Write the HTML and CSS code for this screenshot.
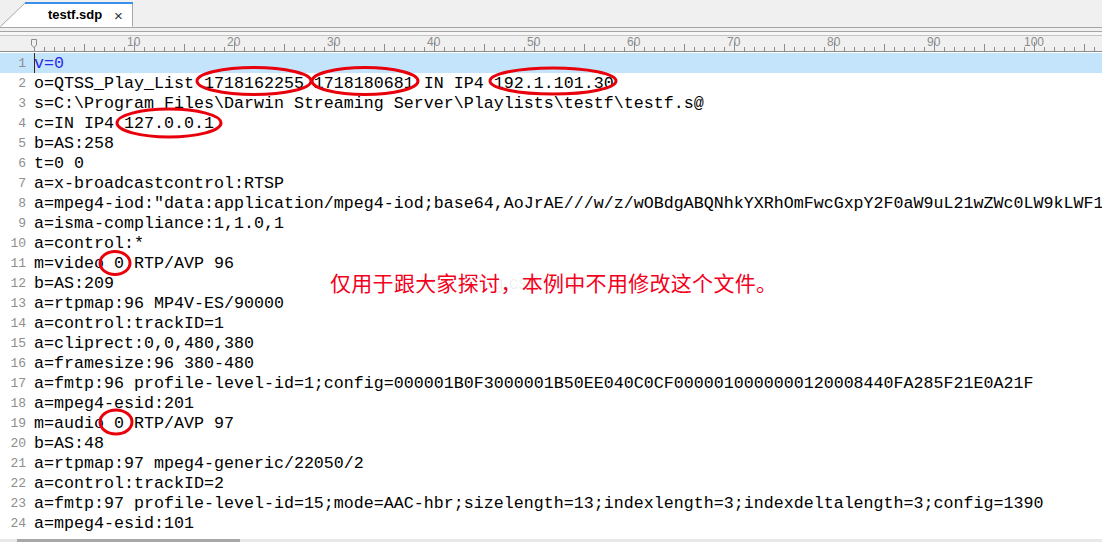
FILE: index.html
```html
<!DOCTYPE html>
<html lang="en">
<head>
  <meta charset="UTF-8">
  <title>testf.sdp</title>
  <link rel="stylesheet" href="styles.css">
</head>
<body>
  <div class="tabbar">
    <div class="tab">
      <svg class="tab-shape" width="134" height="25" viewBox="0 0 134 25">
        <path d="M0.5 25 L25 1 L132.5 1 L132.5 25 Z" fill="#fff"/>
        <path d="M0.5 24.5 L25 1" stroke="#a8a8a8" fill="none"/>
        <path d="M132.5 1 L132.5 24.5" stroke="#a8a8a8" fill="none"/>
        <rect x="25" y="0" width="108" height="2" fill="#3c8fe8"/>
      </svg>
      <span class="tab-name">testf.sdp</span>
      <span class="tab-close">&#215;</span>
    </div>
  </div>
  <div class="strip"></div>
  <div class="ruler">
    <svg class="ruler-mark" width="8" height="11" viewBox="0 0 8 11">
      <path d="M1.5 1.5 H6.5 V7 L4 9.5 L1.5 7 Z" fill="#f0f0f0" stroke="#8c8c8c"/>
    </svg>
    <div class="ruler-scale">
      <span class="ruler-num"></span>
      <span class="ruler-num">10</span>
      <span class="ruler-num">20</span>
      <span class="ruler-num">30</span>
      <span class="ruler-num">40</span>
      <span class="ruler-num">50</span>
      <span class="ruler-num">60</span>
      <span class="ruler-num">70</span>
      <span class="ruler-num">80</span>
      <span class="ruler-num">90</span>
      <span class="ruler-num">100</span>
    </div>
  </div>

  <div class="editor">
    <div class="line current"><span class="ln">1</span><span class="code"><span class="kw">v=0</span></span></div>
    <div class="line"><span class="ln">2</span><span class="code">o=QTSS_Play_List 1718162255 1718180681 IN IP4 192.1.101.30</span></div>
    <div class="line"><span class="ln">3</span><span class="code">s=C:\Program_Files\Darwin Streaming Server\Playlists\testf\testf.s@</span></div>
    <div class="line"><span class="ln">4</span><span class="code">c=IN IP4 127.0.0.1</span></div>
    <div class="line"><span class="ln">5</span><span class="code">b=AS:258</span></div>
    <div class="line"><span class="ln">6</span><span class="code">t=0 0</span></div>
    <div class="line"><span class="ln">7</span><span class="code">a=x-broadcastcontrol:RTSP</span></div>
    <div class="line"><span class="ln">8</span><span class="code">a=mpeg4-iod:"data:application/mpeg4-iod;base64,AoJrAE///w/z/wOBdgABQNhkYXRhOmFwcGxpY2F0aW9uL21wZWc0LW9kLWF1O2Jhc2U2NCxBVjRCSEFFWERBV0ZBQUFB"</span></div>
    <div class="line"><span class="ln">9</span><span class="code">a=isma-compliance:1,1.0,1</span></div>
    <div class="line"><span class="ln">10</span><span class="code">a=control:*</span></div>
    <div class="line"><span class="ln">11</span><span class="code">m=video 0 RTP/AVP 96</span></div>
    <div class="line"><span class="ln">12</span><span class="code">b=AS:209</span></div>
    <div class="line"><span class="ln">13</span><span class="code">a=rtpmap:96 MP4V-ES/90000</span></div>
    <div class="line"><span class="ln">14</span><span class="code">a=control:trackID=1</span></div>
    <div class="line"><span class="ln">15</span><span class="code">a=cliprect:0,0,480,380</span></div>
    <div class="line"><span class="ln">16</span><span class="code">a=framesize:96 380-480</span></div>
    <div class="line"><span class="ln">17</span><span class="code">a=fmtp:96 profile-level-id=1;config=000001B0F3000001B50EE040C0CF0000010000000120008440FA285F21E0A21F</span></div>
    <div class="line"><span class="ln">18</span><span class="code">a=mpeg4-esid:201</span></div>
    <div class="line"><span class="ln">19</span><span class="code">m=audio 0 RTP/AVP 97</span></div>
    <div class="line"><span class="ln">20</span><span class="code">b=AS:48</span></div>
    <div class="line"><span class="ln">21</span><span class="code">a=rtpmap:97 mpeg4-generic/22050/2</span></div>
    <div class="line"><span class="ln">22</span><span class="code">a=control:trackID=2</span></div>
    <div class="line"><span class="ln">23</span><span class="code">a=fmtp:97 profile-level-id=15;mode=AAC-hbr;sizelength=13;indexlength=3;indexdeltalength=3;config=1390</span></div>
    <div class="line"><span class="ln">24</span><span class="code">a=mpeg4-esid:101</span></div>
  </div>

  <div class="hscroll"><div class="hscroll-thumb"></div></div>

  <!-- red annotations drawn over the editor -->
  <svg class="marks" width="1102" height="542" viewBox="0 0 1102 542">
    <g fill="none" stroke="#e8000b" stroke-width="3">
      <ellipse cx="254" cy="81" rx="57" ry="13.5"/>
      <ellipse cx="365" cy="81" rx="53" ry="13.5"/>
      <ellipse cx="553" cy="81" rx="63" ry="13"/>
      <ellipse cx="169" cy="123" rx="52" ry="14"/>
      <ellipse cx="115" cy="263" rx="15" ry="11.5"/>
      <ellipse cx="116" cy="422" rx="16" ry="12"/>
    </g>
  </svg>
  <div class="watermark">http://blog.csdn.net/</div>
  <div class="note">仅用于跟大家探讨，本例中不用修改这个文件。</div>
</body>
</html>
```

FILE: styles.css
```css
body {
  margin: 0;
  width: 1102px;
  height: 542px;
  overflow: hidden;
  position: relative;
  background-color: #fff;
  font-family: "Liberation Sans", Arial, sans-serif;
}

.tabbar {
  height: 27px;
  background-color: #f0f0f0;
  display: flex;
  align-items: flex-end;
  border-bottom: 1px solid #a5a5a5;
}

.tab {
  position: relative;
  width: 134px;
  height: 25px;
}

.tab-shape {
  position: absolute;
  left: 0;
  top: 0;
}

.tab-name {
  position: absolute;
  left: 48px;
  top: 5px;
  font-size: 13px;
  font-weight: bold;
  color: #000;
}

.tab-close {
  position: absolute;
  left: 114px;
  top: 5px;
  font-size: 15px;
  color: #333;
}

.strip {
  height: 7px;
  background: linear-gradient(#f0f0f0 0 3px, #a5a5a5 3px 4px, #f7f7f7 4px 7px);
  border-bottom: 1px solid #c4c4c4;
}

.ruler {
  position: relative;
  height: 15px;
  background-color: #f0f0f0;
  border-bottom: 1px solid #8c8c8c;
}

.ruler-mark {
  position: absolute;
  left: 30px;
  top: 2px;
}

.ruler-scale {
  margin-left: 34px;
  height: 15px;
  display: flex;
  background-image:
    linear-gradient(to right, #8c8c8c 1px, transparent 1px),
    linear-gradient(to right, #8c8c8c 1px, transparent 1px),
    linear-gradient(to right, #8c8c8c 1px, transparent 1px);
  background-size: 10px 4px, 50px 7px, 100px 9px;
  background-repeat: repeat-x;
  background-position: 0 100%, 0 100%, 0 100%;
}

.ruler-num {
  flex: 0 0 100px;
  position: relative;
  font-size: 12px;
  line-height: 13px;
  color: #8c8c8c;
}

.ruler-num:not(:empty) {
  text-indent: -7px;
}

.ruler-num:nth-child(n+11) {
  text-indent: -10px;
}

.editor {
  padding-top: 1px;
  font-family: "Liberation Mono", "Courier New", monospace;
}

.line {
  display: flex;
  height: 20px;
  line-height: 22px;
}

.line.current {
  background-color: #c4e4fc;
}

.ln {
  flex: 0 0 26px;
  padding-right: 8px;
  text-align: right;
  font-size: 13px;
  color: #8e8e8e;
}

.code {
  position: relative;
  white-space: pre;
  font-size: 16.66px;
  color: #000;
  overflow: hidden;
}

.line.current .code::before {
  content: "";
  position: absolute;
  left: -1px;
  top: 0;
  width: 2px;
  height: 20px;
  background-color: #3a2612;
}

.kw {
  color: #2a2ae8;
}

.hscroll {
  margin-top: 6px;
  height: 3px;
  background-color: #e8e8e8;
}

.hscroll-thumb {
  margin-left: 17px;
  width: 223px;
  height: 3px;
  background-color: #a8a8a8;
}

.marks {
  position: absolute;
  left: 0;
  top: 0;
  pointer-events: none;
}

.watermark {
  position: absolute;
  left: 420px;
  top: 272px;
  font-size: 19px;
  color: rgba(0, 0, 0, 0.07);
  font-family: "Liberation Sans", sans-serif;
}

.note {
  position: absolute;
  left: 330px;
  top: 271px;
  font-family: "Noto Sans CJK SC", sans-serif;
  font-size: 21px;
  line-height: 22px;
  letter-spacing: 0.3px;
  color: #f2001c;
}
```
